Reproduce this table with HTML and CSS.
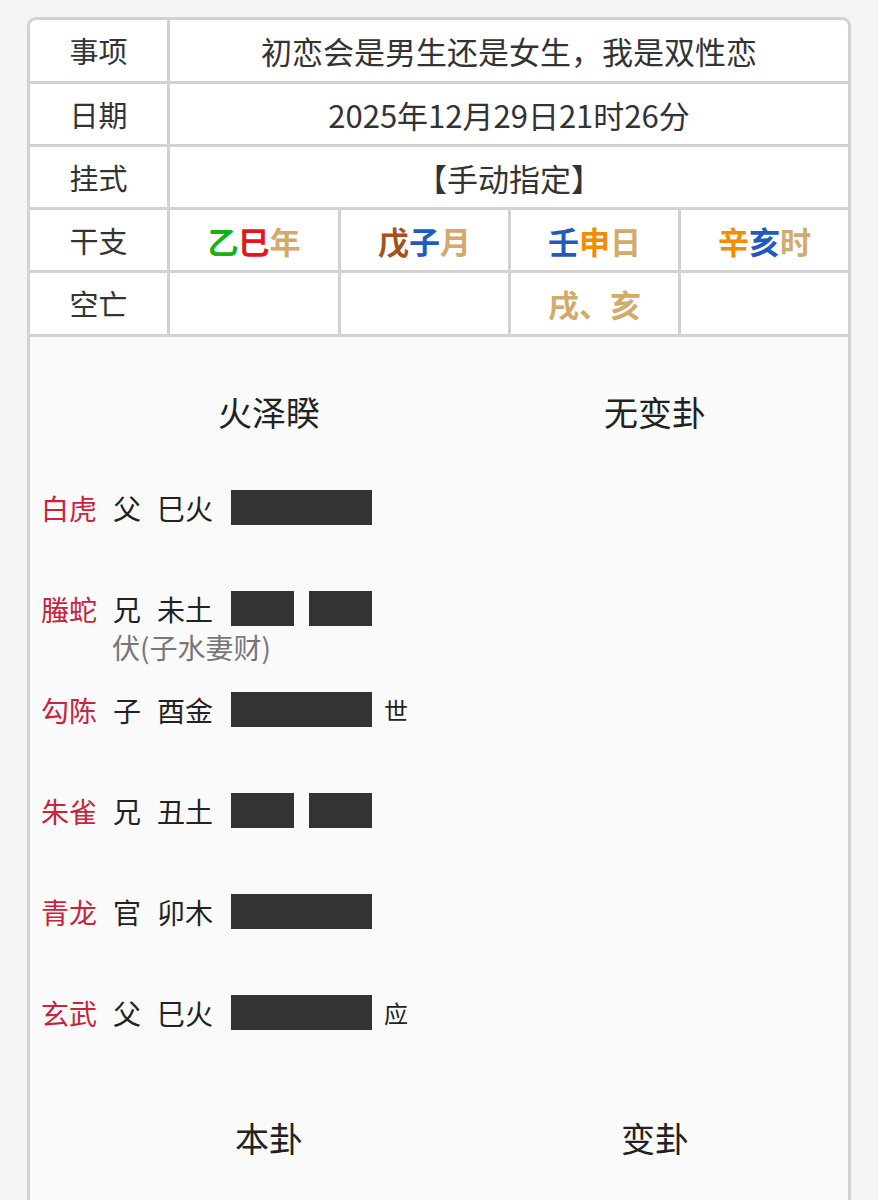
FILE: index.html
```html
<!DOCTYPE html>
<html lang="zh-CN">
<head>
<meta charset="utf-8">
<title>六爻排盘</title>
<link rel="stylesheet" href="styles.css">
</head>
<body>
<div class="card">
  <div class="info">
    <div class="cell label">事项</div>
    <div class="cell wide">初恋会是男生还是女生，我是双性恋</div>
    <div class="cell label">日期</div>
    <div class="cell wide">2025年12月29日21时26分</div>
    <div class="cell label">挂式</div>
    <div class="cell wide">【手动指定】</div>
    <div class="cell label">干支</div>
    <div class="cell gz"><span class="c-green">乙</span><span class="c-red">巳</span><span class="c-tan">年</span></div>
    <div class="cell gz"><span class="c-brown">戊</span><span class="c-blue">子</span><span class="c-tan">月</span></div>
    <div class="cell gz"><span class="c-blue">壬</span><span class="c-orange">申</span><span class="c-tan">日</span></div>
    <div class="cell gz"><span class="c-orange">辛</span><span class="c-blue">亥</span><span class="c-tan">时</span></div>
    <div class="cell label last">空亡</div>
    <div class="cell gz last"></div>
    <div class="cell gz last"></div>
    <div class="cell gz last"><span class="c-tan">戌、亥</span></div>
    <div class="cell gz last"></div>
  </div>

  <div class="gua">
    <div class="titles">
      <div class="title">火泽睽</div>
      <div class="title">无变卦</div>
    </div>

    <div class="yaos">
      <div class="yao">
        <div class="main"><span class="shen">白虎</span><span class="qin">父</span><span class="zhi">巳火</span><span class="bar yang"></span></div>
      </div>
      <div class="yao">
        <div class="main"><span class="shen">螣蛇</span><span class="qin">兄</span><span class="zhi">未土</span><span class="bar yin"><i></i><i></i></span></div>
        <div class="fu">伏(子水妻财)</div>
      </div>
      <div class="yao">
        <div class="main"><span class="shen">勾陈</span><span class="qin">子</span><span class="zhi">酉金</span><span class="bar yang"></span><span class="mark">世</span></div>
      </div>
      <div class="yao">
        <div class="main"><span class="shen">朱雀</span><span class="qin">兄</span><span class="zhi">丑土</span><span class="bar yin"><i></i><i></i></span></div>
      </div>
      <div class="yao">
        <div class="main"><span class="shen">青龙</span><span class="qin">官</span><span class="zhi">卯木</span><span class="bar yang"></span></div>
      </div>
      <div class="yao">
        <div class="main"><span class="shen">玄武</span><span class="qin">父</span><span class="zhi">巳火</span><span class="bar yang"></span><span class="mark">应</span></div>
      </div>
    </div>

    <div class="titles bottom">
      <div class="title">本卦</div>
      <div class="title">变卦</div>
    </div>
  </div>
</div>
</body>
</html>
```

FILE: styles.css
```css
* { box-sizing: border-box; }

html, body {
  margin: 0;
  padding: 0;
  background: #f5f5f5;
  font-family: "Noto Sans CJK SC", "Noto Sans", sans-serif;
  color: #333;
}

.card {
  margin: 17px 0 0 27px;
  width: 824px;
  min-height: 1200px;
  border: 3px solid #d2d2d2;
  border-radius: 9px;
  background: #fafafa;
  overflow: hidden;
}

.info {
  display: grid;
  grid-template-columns: 137px 168px 167px 167px 167px;
  grid-template-rows: 61px 60px 60px 60px 61px;
  column-gap: 3px;
  row-gap: 3px;
  background: #d2d2d2;
  padding-bottom: 3px;
}

.cell {
  background: #fff;
  display: flex;
  align-items: center;
  justify-content: center;
  font-size: 31px;
  line-height: 1;
  color: #333;
}

.cell.label { font-size: 29px; }

.cell.wide { grid-column: span 4; }

.gz { font-weight: 700; }

.c-green { color: #12b312; }
.c-red { color: #e8141c; }
.c-tan { color: #d2aa6c; }
.c-brown { color: #a4521f; }
.c-blue { color: #1f5bbf; }
.c-orange { color: #f28c00; }

.gua {
  padding: 50px 0 0 0;
}

.titles {
  display: grid;
  grid-template-columns: 386px 386px;
  padding-left: 46px;
}

.title {
  text-align: center;
  font-size: 34px;
  line-height: 50px;
  height: 50px;
  color: #222;
}

.yaos {
  margin-top: 53px;
  padding-left: 11px;
}

.yao {
  height: 101px;
}

.main {
  display: flex;
  align-items: center;
  height: 35px;
}

.shen {
  font-size: 28px;
  color: #c8233b;
  width: 58px;
  line-height: 1;
}

.qin {
  font-size: 28px;
  color: #222;
  margin-left: 14px;
  width: 28px;
  line-height: 1;
}

.zhi {
  font-size: 28px;
  color: #222;
  margin-left: 16px;
  width: 58px;
  line-height: 1;
}

.bar {
  margin-left: 16px;
  width: 141px;
  height: 35px;
  display: flex;
  justify-content: space-between;
}

.bar.yang { background: #333; }

.bar.yin i {
  display: block;
  width: 63px;
  height: 35px;
  background: #333;
}

.mark {
  margin-left: 12px;
  font-size: 24px;
  color: #222;
  line-height: 1;
}

.fu {
  margin-left: 71px;
  margin-top: 5px;
  font-size: 28px;
  line-height: 32px;
  color: #777;
}

.bottom {
  margin-top: 17px;
}
```
